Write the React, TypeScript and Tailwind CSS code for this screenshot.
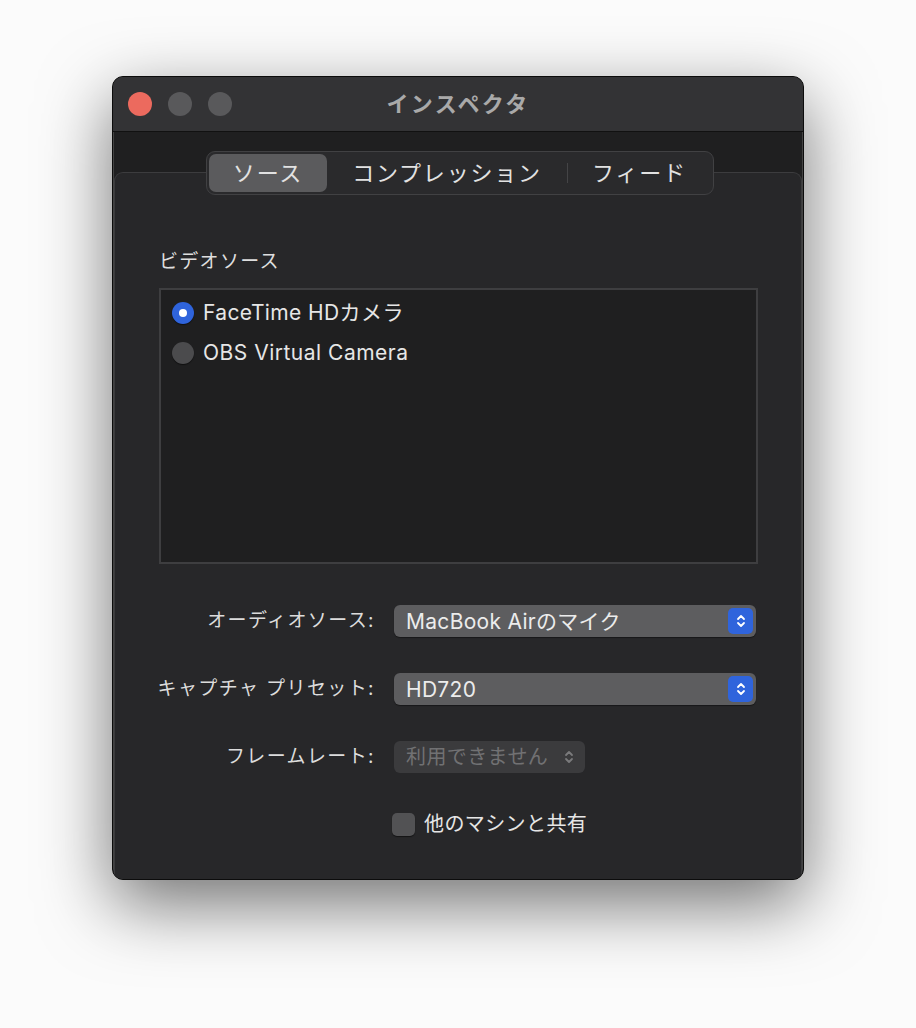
import React from "react"

const font = { fontFamily: 'Inter, "Noto Sans CJK JP", sans-serif' }

function Stepper({ disabled }: { disabled?: boolean }) {
  return (
    <svg width="12" height="16" viewBox="0 0 12 16" fill="none" stroke={disabled ? "#7a7a7c" : "#ffffff"} strokeWidth="1.8" strokeLinecap="round" strokeLinejoin="round">
      <path d="M3 6l3-3 3 3" />
      <path d="M3 10l3 3 3-3" />
    </svg>
  )
}

function Select({ value }: { value: string }) {
  return (
    <div className="flex items-center w-[362px] h-[32px] rounded-[6px] bg-[#5d5d5f] pl-[12px] pr-[3px] shadow-[0_1px_1px_rgba(0,0,0,0.4)]">
      <span className="flex-1 text-[21px] tracking-[0.3px] text-[#ececec] leading-none">{value}</span>
      <div className="flex items-center justify-center w-[25px] h-[26px] rounded-[5px] bg-[#2f64dc]">
        <Stepper />
      </div>
    </div>
  )
}

function Row({ label, children }: { label: string; children: React.ReactNode }) {
  return (
    <div className="flex items-center">
      <div className="w-[217px] flex justify-end pr-[1px]">
        <span className="whitespace-nowrap text-[19px] tracking-[1.4px] text-[#dcdcdc]">{label}</span>
      </div>
      <div className="ml-[18px]">{children}</div>
    </div>
  )
}

export default function App() {
  return (
    <div className="w-[916px] h-[1028px] bg-[#fbfbfb] pt-[76px] pl-[112px]" style={font}>
      <div className="w-[692px] h-[804px] rounded-[11px] bg-[#1f1f20] border border-[#0c0c0c] shadow-[0_24px_70px_rgba(0,0,0,0.55),inset_0_0_0_1px_rgba(255,255,255,0.16)] overflow-hidden flex flex-col">
        <div className="relative h-[55px] bg-[#333335] flex items-center justify-center border-b border-[#111]">
          <div className="absolute left-[15px] top-[15px] flex gap-[16px]">
            <span className="w-[24px] h-[24px] rounded-full bg-[#ec6a5e]" />
            <span className="w-[24px] h-[24px] rounded-full bg-[#59595b]" />
            <span className="w-[24px] h-[24px] rounded-full bg-[#59595b]" />
          </div>
          <span className="text-[22px] font-bold text-[#a9a9a9] tracking-[2.3px]">インスペクタ</span>
        </div>
        <div className="flex-1 flex flex-col pt-[19px] px-[1px]">
          <div className="relative z-10 self-center -mb-[23px] ml-[4px] flex items-center h-[44px] p-[2px] rounded-[9px] bg-[#2a2a2c] border border-[#414143] text-[22px] tracking-[1.8px] text-[#e2e2e2]">
            <div className="w-[118px] h-full rounded-[7px] bg-[#5b5b5d] flex items-center justify-center">ソース</div>
            <div className="w-[240px] h-full flex items-center justify-center">コンプレッション</div>
            <div className="w-px h-[20px] bg-[#444446]" />
            <div className="w-[143px] h-full flex items-center justify-center">フィード</div>
          </div>
          <div className="flex-1 rounded-t-[9px] bg-[#272729] border-t border-x border-[#3c3c3e] pt-[77px] pl-[44px]">
            <div className="text-[19px] tracking-[1.3px] text-[#dedede] leading-[24px] mb-[14px]">ビデオソース</div>
            <div className="w-[599px] h-[276px] bg-[#1f1f20] border-2 border-[#3e3e40] pt-[11px] pl-[11px] flex flex-col gap-[16px]">
              <div className="flex items-center gap-[9px]">
                <span className="w-[22px] h-[22px] rounded-full bg-[#2f64dc] flex items-center justify-center shadow-[0_1px_1px_rgba(0,0,0,0.5)]">
                  <span className="w-[8px] h-[8px] rounded-full bg-white" />
                </span>
                <span className="text-[21px] tracking-[0.4px] text-[#e6e6e6] leading-[24px]">FaceTime HDカメラ</span>
              </div>
              <div className="flex items-center gap-[9px]">
                <span className="w-[22px] h-[22px] rounded-full bg-[#4b4b4d] shadow-[0_1px_1px_rgba(0,0,0,0.5)]" />
                <span className="text-[21px] tracking-[0.5px] text-[#e6e6e6] leading-[24px]">OBS Virtual Camera</span>
              </div>
            </div>
            <div className="mt-[41px] flex flex-col gap-[36px]">
              <Row label="オーディオソース:">
                <Select value="MacBook Airのマイク" />
              </Row>
              <Row label="キャプチャ プリセット:">
                <Select value="HD720" />
              </Row>
              <Row label="フレームレート:">
                <div className="flex items-center w-[191px] h-[32px] rounded-[6px] bg-[#3b3b3d] pl-[12px] pr-[10px]">
                  <span className="flex-1 text-[20px] tracking-[0.4px] text-[#717173] leading-none">利用できません</span>
                  <Stepper disabled />
                </div>
              </Row>
              <div className="flex items-center ml-[233px] gap-[9px]">
                <span className="w-[23px] h-[23px] rounded-[5px] bg-[#525254] shadow-[0_1px_1px_rgba(0,0,0,0.5)]" />
                <span className="text-[20px] tracking-[0.4px] text-[#e6e6e6]">他のマシンと共有</span>
              </div>
            </div>
          </div>
        </div>
      </div>
    </div>
  )
}
